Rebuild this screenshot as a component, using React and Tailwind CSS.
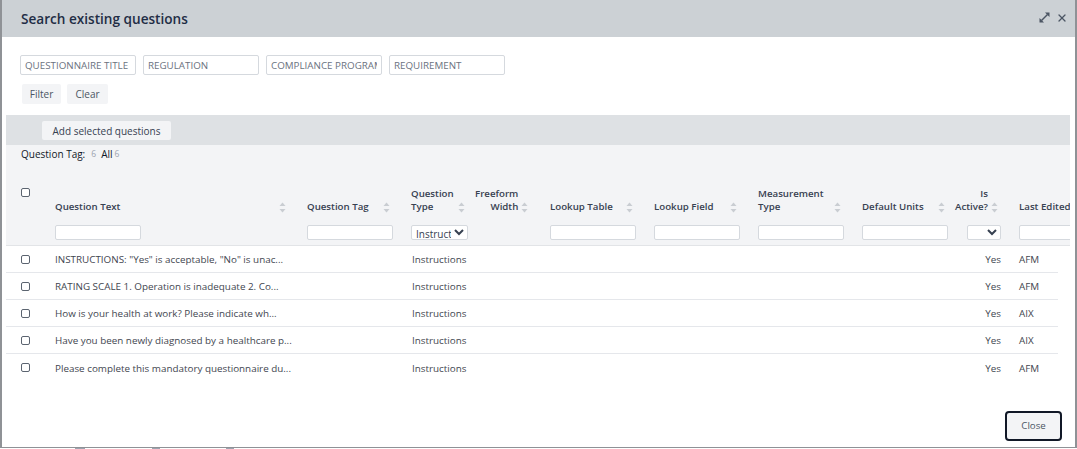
import { X } from 'lucide-react'

const GRID = 'grid grid-cols-[49px_252px_104px_64px_75px_104px_104px_104px_104px_53px_100px]'

const rows = [
  ['INSTRUCTIONS: "Yes" is acceptable, "No" is unac...', 'AFM'],
  ['RATING SCALE 1. Operation is inadequate 2. Co...', 'AFM'],
  ['How is your health at work? Please indicate wh...', 'AIX'],
  ['Have you been newly diagnosed by a healthcare p...', 'AIX'],
  ['Please complete this mandatory questionnaire du...', 'AFM'],
]

function SortIcon() {
  return (
    <svg width="7" height="11" viewBox="0 0 7 11" className="shrink-0 fill-[#c9cdd2]">
      <path d="M3.5 0.5 L6.5 4 L0.5 4 Z" />
      <path d="M3.5 10.5 L6.5 7 L0.5 7 Z" />
    </svg>
  )
}

function ExpandIcon() {
  return (
    <svg width="11" height="11" viewBox="0 0 11 11" className="fill-[#4b5563] stroke-[#4b5563]">
      <path d="M2.5 8.5 L8.5 2.5" strokeWidth="1.5" fill="none" />
      <path d="M6 0.5 L10.5 0.5 L10.5 5 Z" strokeWidth="0" />
      <path d="M0.5 6 L0.5 10.5 L5 10.5 Z" strokeWidth="0" />
    </svg>
  )
}

function Check() {
  return <input type="checkbox" className="appearance-none block w-[9px] h-[9px] bg-white border border-[#5b6470] rounded-[2px]" />
}

function HeadCell({ lines, right, iconGap = 'justify-between', pr = 'pr-[21px]', children }) {
  return (
    <div className="flex flex-col">
      <div className={`h-[30px] flex items-end gap-[3px] ${iconGap} ${pr}`}>
        <div className={`font-semibold text-[9.7px] leading-[13px] text-[#374151] whitespace-nowrap ${right ? 'text-right' : ''}`}>
          {lines.map((l) => (
            <div key={l}>{l}</div>
          ))}
        </div>
        <SortIcon />
      </div>
      <div className="mt-[12px] h-[16px]">{children}</div>
    </div>
  )
}

function FilterInput() {
  return <input className="block w-[86px] h-[15px] bg-white border border-[#d5d9de] rounded-[2px]" />
}

function FilterSelect({ value, width }) {
  return (
    <select
      defaultValue={value}
      className={`block ${width} h-[15px] bg-white border border-[#d5d9de] rounded-[2px] pl-0 text-[10px] leading-none text-[#374151]`}
    >
      <option value="">{''}</option>
      <option>Instructions</option>
    </select>
  )
}

export default function App() {
  return (
    <div className="w-[1077px] h-[449px] bg-white overflow-hidden font-['Open_Sans',sans-serif]">
      <div className="h-[448px] border-l-2 border-r-2 border-b-[1.5px] border-[#8f9296] flex flex-col">
        <header className="h-[37px] shrink-0 bg-[#ccd1d5] flex items-center justify-between pl-[19px] pr-[7px]">
          <h1 className="pt-px text-[13.6px] font-semibold text-[#1f2d45]">Search existing questions</h1>
          <div className="flex items-center gap-[6px] pb-[2px]">
            <ExpandIcon />
            <X size={12} strokeWidth={2.6} className="text-[#4b5563]" />
          </div>
        </header>

        <div className="flex gap-[7px] pl-[18px] pt-[18px]">
          {['QUESTIONNAIRE TITLE', 'REGULATION', 'COMPLIANCE PROGRAM', 'REQUIREMENT'].map((p) => (
            <input
              key={p}
              placeholder={p}
              className="w-[116px] h-[20px] border border-[#d5d9de] rounded-[2px] px-[4px] text-[9.8px] text-[#6b7280] placeholder:text-[#6b7280]"
            />
          ))}
        </div>

        <div className="flex gap-[6px] pl-5 pt-[9px]">
          <button className="h-[20px] w-[39px] pt-px bg-[#f3f4f6] rounded-[2px] text-[10px] text-[#4b5563]">Filter</button>
          <button className="h-[20px] w-[41px] pt-px bg-[#f3f4f6] rounded-[2px] text-[10px] text-[#4b5563]">Clear</button>
        </div>

        <div className="mt-[11px] ml-1 mr-[5px] flex-1 overflow-hidden flex flex-col">
          <div className="h-[30px] shrink-0 bg-[#dee1e4] flex items-center pl-9">
            <button className="h-[19px] w-[129px] pt-[2px] bg-[#f3f4f6] rounded-[2px] font-medium text-[10px] text-[#374151]">
              Add selected questions
            </button>
          </div>

          <div className="h-[101px] shrink-0 bg-[#f3f4f6] border-b border-[#e2e4e7]">
            <div className="flex items-start pl-[15px] pt-[2px] h-[38px] text-[10px] font-medium text-[#111827]">
              <span>Question Tag:</span>
              <span className="ml-[6px] text-[8.5px] leading-[13px] text-[#9ca3af]">6</span>
              <span className="ml-[5px]">All</span>
              <span className="ml-[2px] text-[8.5px] leading-[13px] text-[#9ca3af]">6</span>
            </div>
            <div className={GRID}>
              <div className="pl-[15px] pt-[5px]">
                <Check />
              </div>
              <HeadCell lines={['Question Text']}>
                <FilterInput />
              </HeadCell>
              <HeadCell lines={['Question Tag']}>
                <FilterInput />
              </HeadCell>
              <HeadCell lines={['Question', 'Type']} pr="pr-[10px]">
                <FilterSelect value="Instructions" width="w-[57px]" />
              </HeadCell>
              <HeadCell lines={['Freeform', 'Width']} right iconGap="justify-start" pr="pr-0" />
              <HeadCell lines={['Lookup Table']}>
                <FilterInput />
              </HeadCell>
              <HeadCell lines={['Lookup Field']}>
                <FilterInput />
              </HeadCell>
              <HeadCell lines={['Measurement', 'Type']}>
                <FilterInput />
              </HeadCell>
              <HeadCell lines={['Default Units']}>
                <FilterInput />
              </HeadCell>
              <div className="-ml-[11px]">
                <HeadCell lines={['Is', 'Active?']} right iconGap="justify-start" pr="pr-0">
                  <div className="pl-[12px]">
                    <FilterSelect value="" width="w-[34px]" />
                  </div>
                </HeadCell>
              </div>
              <HeadCell lines={['Last Edited']} iconGap="justify-start" pr="pr-0">
                <FilterInput />
              </HeadCell>
            </div>
          </div>

          <div className="w-[1052px] text-[9.85px] leading-[14px] text-[#3f4650]">
            {rows.map(([text, user], i) => (
              <div key={text} className={`${GRID} h-[27px] items-center ${i < 4 ? 'border-b border-[#e5e7eb]' : ''}`}>
                <div className="pl-[15px]">
                  <Check />
                </div>
                <div className="whitespace-nowrap">{text}</div>
                <div />
                <div className="pl-px">Instructions</div>
                <div />
                <div />
                <div />
                <div />
                <div />
                <div className="text-right pr-[18px]">Yes</div>
                <div>{user}</div>
              </div>
            ))}
          </div>
          <div className="flex-1" />
        </div>

        <div className="h-0 relative">
          <button className="absolute right-[13px] bottom-[6px] w-[57px] h-[30px] bg-[#f3f4f6] border-2 border-[#111827] rounded-[4px] text-[9.7px] text-[#4b5563]">
            Close
          </button>
        </div>
      </div>
      {/* tops of the page text showing under the modal */}
      <div className="flex h-px pl-[75px] gap-[67px]">
        <div className="w-[10px] bg-[#9ca3af]" />
        <div className="w-[8px] bg-[#9ca3af]" />
        <div className="w-[8px] ml-[-1px] bg-[#9ca3af]" />
      </div>
    </div>
  )
}
